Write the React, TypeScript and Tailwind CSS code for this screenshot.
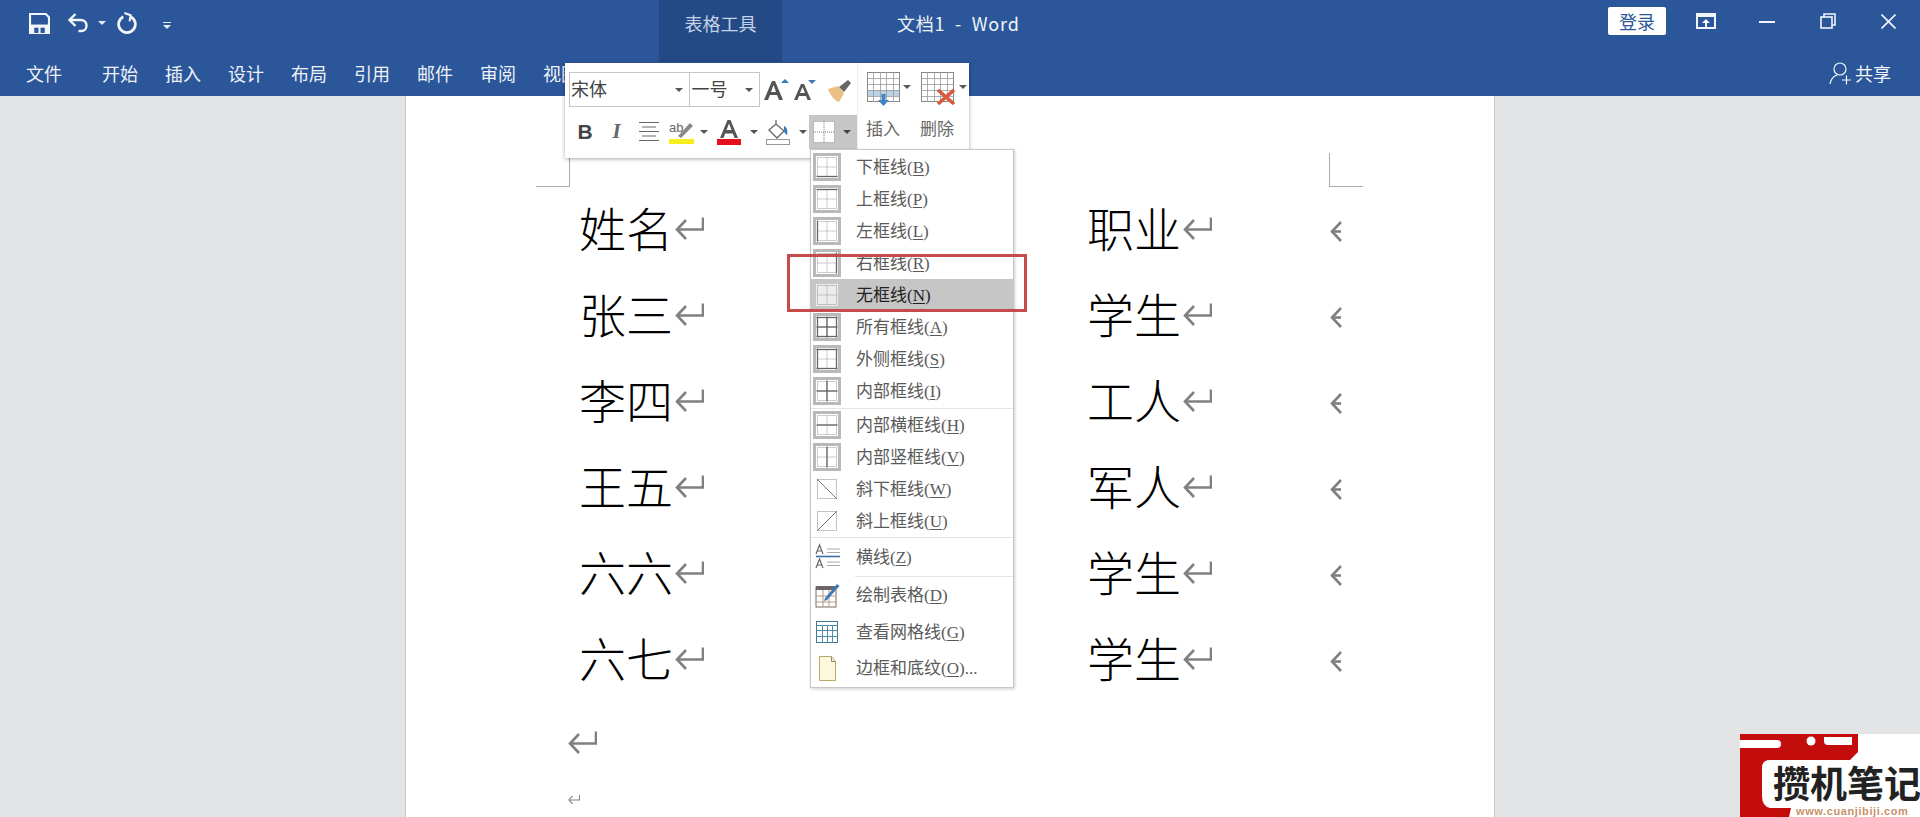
import React from "react";

const Caret = ({ c = "#555", w = 8 }: { c?: string; w?: number }) => (
  <svg width={w} height={w / 2} viewBox="0 0 8 4"><path d="M0 0h8L4 4z" fill={c} /></svg>
);

const Ret = ({ w = 29, h = 25 }: { w?: number; h?: number }) => (
  <svg width={w} height={h} viewBox="0 0 29 25" fill="none" stroke="#808080" strokeWidth="2.6">
    <path d="M28 1.5v12H3" />
    <path d="M11 4l-9 9.5 9 9.5" />
  </svg>
);

const Head = () => (
  <svg width="13" height="25" viewBox="0 0 13 25" fill="none" stroke="#808080" strokeWidth="2.6">
    <path d="M11 3l-9 9.500 9 9.500" />
    <path d="M2 12.500h9" />
  </svg>
);

type Sides = { t?: 1; b?: 1; l?: 1; r?: 1; h?: 1; v?: 1 };
const BorderIcon = ({ s, tile = true }: { s: Sides; tile?: boolean }) => (
  <svg width="28" height="28" viewBox="0 0 28 28" className="shrink-0">
    {tile && <rect x="0" y="0" width="28" height="28" fill="#b9b9b9" />}
    <rect x="3" y="3" width="22" height="22" fill={tile ? "#fff" : "#ececec"} />
    <g fill="none" stroke="#999" strokeWidth="1" strokeDasharray="1 1">
      <rect x="4.500" y="4.500" width="19" height="19" />
      <path d="M14 4.500v19M4.500 14h19" />
    </g>
    <g fill="none" stroke="#666" strokeWidth="1.300">
      {s.t && <path d="M3.500 4.500h21" />}
      {s.b && <path d="M3.500 23.500h21" />}
      {s.l && <path d="M4.500 3.500v21" />}
      {s.r && <path d="M23.500 3.500v21" />}
      {s.h && <path d="M3.500 14h21" />}
      {s.v && <path d="M14 3.500v21" />}
    </g>
  </svg>
);

const Diag = ({ up }: { up?: boolean }) => (
  <svg width="28" height="28" viewBox="0 0 28 28" className="shrink-0">
    <rect x="4.500" y="4.500" width="19" height="19" fill="none" stroke="#888" strokeDasharray="1 1" />
    <path d={up ? "M4 24L24 4" : "M4 4l20 20"} stroke="#777" strokeWidth="1" />
  </svg>
);

const LinesIcon = () => (
  <svg width="28" height="28" viewBox="0 0 28 28" className="shrink-0">
    <path d="M14 6h13M14 9.500h13M14 19h13M14 22.500h13" stroke="#aaa" strokeWidth="1" />
    <path d="M3 13.500h24" stroke="#3b6ea5" strokeWidth="1.600" />
    <path d="M3 11l3.500-9L10 11M4.300 8h4.400M3 25l3.500-9 3.500 9M4.300 22h4.400" fill="none" stroke="#666" strokeWidth="1.200" />
  </svg>
);
const DrawIcon = () => (
  <svg width="28" height="28" viewBox="0 0 28 28" className="shrink-0">
    <rect x="3" y="6" width="20" height="20" fill="#fff" stroke="#7a6a60" strokeWidth="1" />
    <rect x="3" y="5" width="20" height="4" fill="#6e6466" />
    <path d="M3 15h20M3 21h20M10 9v17M16 9v17" stroke="#b59a8a" strokeWidth="1" />
    <path d="M12 17L24 3l2.500 2L14 19l-3 1z" fill="#3f78b5" />
  </svg>
);
const GridIcon = () => (
  <svg width="28" height="28" viewBox="0 0 28 28" className="shrink-0">
    <rect x="3.500" y="3.500" width="21" height="21" fill="#fff" stroke="#3d7a92" />
    <path d="M3.500 7.500h21M3.500 12.500h21M3.500 18.500h21M9.500 7v18M14.500 7v18M19.500 7v18" stroke="#4f8aa5" />
  </svg>
);
const PageIcon = () => (
  <svg width="28" height="28" viewBox="0 0 28 28" className="shrink-0">
    <path d="M6.500 2.500h12l4 5v19h-16z" fill="#fdf8dc" stroke="#b9aa6c" />
    <path d="M18.500 2.500v5h4" fill="none" stroke="#888" />
  </svg>
);

const items: { label: string; key: string; icon: React.ReactNode }[] = [
  { label: "下框线", key: "B", icon: <BorderIcon s={{ b: 1 }} /> },
  { label: "上框线", key: "P", icon: <BorderIcon s={{ t: 1 }} /> },
  { label: "左框线", key: "L", icon: <BorderIcon s={{ l: 1 }} /> },
  { label: "右框线", key: "R", icon: <BorderIcon s={{ r: 1 }} /> },
];

const Row = ({ label, k, icon, after = "", active = false, h = "h-8" }: { label: string; k: string; icon: React.ReactNode; after?: string; active?: boolean; h?: string }) => (
  <div className={`${h} flex items-center pl-[2px] ${active ? "bg-[#c6c6c6] text-[#222]" : "text-[#5a5a5a]"}`}>
    {icon}
    <span className="ml-[15px] mb-[1px] text-[17px] leading-none whitespace-nowrap">
      {label}
      <span className="font-['Liberation_Serif',serif]">
        (<span className="underline underline-offset-2">{k}</span>){after}
      </span>
    </span>
  </div>
);

const tabs = ["开始", "插入", "设计", "布局", "引用", "邮件", "审阅", "视图"];
const rows: [string, string][] = [
  ["姓名", "职业"],
  ["张三", "学生"],
  ["李四", "工人"],
  ["王五", "军人"],
  ["六六", "学生"],
  ["六七", "学生"],
];

export default function App() {
  return (
    <div className="relative w-[1920px] h-[817px] overflow-hidden bg-[#e3e4e6] font-['Noto_Sans_CJK_SC','Liberation_Sans',sans-serif]">
      {/* Title bar */}
      <header className="h-[96px] bg-[#2b579a] text-white flex flex-col">
        <div className="h-[46px] flex items-start relative">
          <div className="flex items-center h-[46px] pl-[29px]">
            <svg width="21" height="21" viewBox="0 0 20 20">
              <path d="M1 1h15l3 3v15H1z" fill="none" stroke="#f2f5fa" strokeWidth="2" />
              <rect x="1" y="11" width="18" height="8" fill="#f2f5fa" />
              <rect x="5" y="14" width="4" height="5" fill="#2b579a" />
              <rect x="11" y="14" width="4" height="5" fill="#2b579a" />
            </svg>
            <svg className="ml-[17px]" width="23" height="22" viewBox="0 0 22 22" fill="none" stroke="#f2f5fa" strokeWidth="2.400">
              <path d="M8 2L2 8l6 6" />
              <path d="M3 8h10c4 0 6 2.500 6 5.500S17 19 14 19h-3" />
            </svg>
            <span className="ml-[8px]"><Caret c="#e6ebf3" /></span>
            <svg className="ml-[11px]" width="21" height="23" viewBox="0 0 20 22" fill="none" stroke="#f2f5fa" strokeWidth="2.600">
              <path d="M6 4.500a8 8 0 1 0 7 0" />
              <path d="M7 1l6 2-1 6" strokeWidth="2" />
            </svg>
            <span className="ml-[25px] flex flex-col items-center gap-[2px] mt-[4px]">
              <span className="w-[8px] h-[1px] bg-[#e6ebf3]" />
              <Caret c="#e6ebf3" />
            </span>
          </div>
          <div className="absolute left-[659px] top-0 w-[123px] h-[62px] bg-[#234a85] pt-[12px] text-center text-[18px] leading-[22px] text-[#c5d3e6]">
            表格工具
          </div>
          <div className="absolute left-[897px] top-[11px] text-[18px] leading-[24px] tracking-[0.8px] text-[#f0f3f8] whitespace-nowrap">
            文档1&nbsp; -&nbsp; Word
          </div>
          <div className="ml-auto flex items-center h-[46px]">
            <div className="w-[58px] h-[28px] mb-[4px] bg-white rounded-[2px] text-[#2b579a] text-[18px] leading-[28px] text-center">登录</div>
            <svg className="ml-[30px] mb-[4px]" width="20" height="16" viewBox="0 0 20 16">
              <rect x="1" y="1" width="18" height="14" fill="none" stroke="#f2f5fa" strokeWidth="2" />
              <path d="M1 1h18v3H1z" fill="#f2f5fa" />
              <path d="M10 6l4 4h-3v4H9v-4H6z" fill="#f2f5fa" />
            </svg>
            <span className="ml-[43px] w-[16px] h-[2px] mb-[3px] bg-[#f2f5fa]" />
            <svg className="ml-[45px] mb-[4px]" width="16" height="16" viewBox="0 0 16 16" fill="none" stroke="#f2f5fa" strokeWidth="1.600">
              <rect x="1" y="4" width="11" height="11" />
              <path d="M4 4V1h11v11h-3" />
            </svg>
            <svg className="ml-[45px] mr-[24px] mb-[4px]" width="15" height="15" viewBox="0 0 15 15" stroke="#f2f5fa" strokeWidth="1.600">
              <path d="M0.500 0.500l14 14M14.500 0.500l-14 14" />
            </svg>
          </div>
        </div>
        <div className="h-[50px] flex items-start">
          <span className="ml-[26px] mt-[15px] text-[18px] leading-[24px] text-[#eef2f8] whitespace-nowrap">文件</span>
          <div className="ml-[40px] mt-[15px] flex gap-[27px] text-[#eef2f8] text-[18px] leading-[24px] whitespace-nowrap">
            {tabs.map((t) => (
              <span key={t} className="w-[36px]">{t}</span>
            ))}
          </div>
          <div className="ml-auto mr-[29px] mt-[15px] flex items-center gap-[3px]">
            <svg width="23" height="24" viewBox="0 0 23 24" fill="none" stroke="#f2f5fa" strokeWidth="1.200">
              <circle cx="11" cy="8" r="6" />
              <path d="M1 23c1-5 4-8 7-9M13 19h9M17.500 14.500v9" />
            </svg>
            <span className="text-[18px] leading-[24px] text-[#f2f5fa]">共享</span>
          </div>
        </div>
      </header>

      {/* Page */}
      <main className="ml-[405px] w-[1090px] h-[721px] bg-white border-l border-r border-[#c6c6c6] overflow-hidden">
        <div className="h-[91px] flex items-end justify-between pl-[130px] pr-[131px]">
          <div className="w-[34px] h-[34px] border-r border-b border-[#ababab]" />
          <div className="w-[34px] h-[34px] border-l border-b border-[#ababab]" />
        </div>
        <div className="pl-[173px]">
          {rows.map(([a, b], i) => (
            <div key={i} className="h-[86px] grid grid-cols-[508px_242px_auto] text-[47px] leading-[80px] text-black">
              <div className="flex items-center">
                <span className="mb-[8px] font-light">{a}</span>
                <span className="ml-[2px] mb-[6px]"><Ret /></span>
              </div>
              <div className="flex items-center">
                <span className="mb-[8px] font-light">{b}</span>
                <span className="ml-[2px] mb-[6px]"><Ret /></span>
              </div>
              <div className="flex items-center ml-[1px] mt-[1px]"><Head /></div>
            </div>
          ))}
          <div className="-ml-[11px] mt-[27px] h-[25px]"><Ret /></div>
          <div className="-ml-[11px] mt-[39px]"><Ret w={12} h={11} /></div>
        </div>
      </main>

      {/* Floating mini toolbar */}
      <div className="absolute left-[565px] top-[63px] w-[404px] h-[95px] bg-white flex shadow-[0_1px_4px_rgba(0,0,0,0.35)]">
        <div className="w-[292px] pl-[4px] pt-[9px]">
          <div className="flex items-center h-[35px]">
            <div className="w-[121px] h-[35px] border border-[#c6c6c6] flex items-center justify-between pl-[1px] pr-[6px] text-[18px] leading-[27px] text-[#444]">
              <span className="mb-[3px]">宋体</span><Caret />
            </div>
            <div className="w-[71px] h-[35px] border border-l-0 border-[#c6c6c6] flex items-center justify-between pl-[2px] pr-[6px] text-[18px] leading-[27px] text-[#444]">
              <span className="mb-[3px]">一号</span><Caret />
            </div>
            <div className="w-[29px] h-[35px] ml-[1px] relative flex items-center justify-center">
              <svg width="26" height="28" viewBox="0 0 26 28">
                <path d="M1 24L9 5h3l8 19h-4l-2-5H7l-2 5zM8 16h5l-2.500-7z" fill="#555" fillRule="evenodd" />
                <path d="M18 7l4-4 4 4z" fill="#3d79b4" />
              </svg>
            </div>
            <div className="w-[30px] h-[35px] flex items-center justify-center">
              <svg width="24" height="24" viewBox="0 0 24 24">
                <path d="M1 22L8 6h3l7 16h-3.500l-1.500-4H6l-1.500 4zM7 15h5l-2.500-6z" fill="#555" fillRule="evenodd" />
                <path d="M15 2h8l-4 4z" fill="#3d79b4" />
              </svg>
            </div>
            <div className="w-[37px] h-[35px] flex items-center justify-center">
              <svg width="26" height="26" viewBox="0 0 26 26">
                <path d="M2 12l10-3 6 7-5 9c-4-1-9-7-11-13z" fill="#e9bf82" />
                <path d="M13 10l9-7 3 3-7 9z" fill="#666" />
              </svg>
            </div>
          </div>
          <div className="flex items-center h-[34px] mt-[8px]">
            <span className="w-[32px] text-center text-[21px] font-bold text-[#444] font-['Liberation_Sans',sans-serif]">B</span>
            <span className="w-[31px] text-center text-[21px] italic font-bold text-[#666] font-['Liberation_Serif',serif]">I</span>
            <span className="w-[33px] flex justify-center">
              <svg width="22" height="22" viewBox="0 0 22 22" stroke="#666" strokeWidth="1">
                <path d="M1 1.500h20M4 6h14M1 10.500h20M4 15h14M1 19.500h20" />
              </svg>
            </span>
            <span className="w-[32px] flex justify-center">
              <svg width="26" height="26" viewBox="0 0 26 26">
                <text x="1" y="13" fontSize="13" fill="#666" fontFamily="Liberation Sans">ab</text>
                <path d="M10 17L22 4l3 3-12 12z" fill="#888" />
                <rect x="1" y="20" width="25" height="5" fill="#f7ee1f" />
              </svg>
            </span>
            <span className="w-[14px] flex justify-center"><Caret /></span>
            <span className="w-[36px] flex justify-center">
              <svg width="24" height="26" viewBox="0 0 24 26">
                <path d="M3 19L10.500 1h3L21 19h-3.500l-1.700-4.500H8.200L6.500 19zM9.500 11h5l-2.500-6.500z" fill="#555" fillRule="evenodd" />
                <rect y="20" width="24" height="6" fill="#e5101a" />
              </svg>
            </span>
            <span className="w-[13px] flex justify-center"><Caret /></span>
            <span className="w-[36px] flex justify-center">
              <svg width="26" height="26" viewBox="0 0 26 26">
                <path d="M11 1v4M4 11l7-6 8 7-7 7z" fill="none" stroke="#666" strokeWidth="1.300" />
                <path d="M19 7c3 1 4 5 3 9-2-1-3-3-3-5z" fill="#3d79b4" />
                <rect x="1.500" y="20.500" width="23" height="5" fill="none" stroke="#999" />
              </svg>
            </span>
            <span className="w-[13px] flex justify-center"><Caret /></span>
            <span className="w-[48px] h-[34px] bg-[#c6c6c6] flex items-center pl-[4px] gap-[8px]">
              <svg width="22" height="22" viewBox="0 0 22 22">
                <rect width="22" height="22" fill="#fff" />
                <g fill="none" stroke="#777" strokeDasharray="1 1">
                  <rect x="0.500" y="0.500" width="21" height="21" />
                  <path d="M11 0v22M0 11h22" />
                </g>
              </svg>
              <Caret c="#444" />
            </span>
          </div>
        </div>
        <div className="w-[112px] border-l border-[#eeeeee] pt-[9px] text-[17px] text-[#666]">
          <div className="flex pl-[9px] h-[35px]">
            <div className="flex items-start w-[54px]">
              <svg width="33" height="34" viewBox="0 0 33 34">
                <rect x="0.500" y="0.500" width="32" height="29" fill="#fff" stroke="#888" />
                <rect x="1" y="18" width="31" height="6" fill="#bcd0e4" />
                <path d="M0 6.500h33M0 12.500h33M0 18.500h33M0 24.500h33M6.500 0v30M13.500 0v30M19.500 0v30M26.500 0v30" stroke="#999" strokeWidth="0.800" />
                <path d="M14.500 22h4v6h3.500l-5.500 6-5.500-6h3.500z" fill="#3d85c6" />
              </svg>
              <span className="ml-[3px] mt-[13px]"><Caret /></span>
            </div>
            <div className="flex items-start">
              <svg width="36" height="34" viewBox="0 0 36 34">
                <rect x="0.500" y="0.500" width="32" height="29" fill="#fff" stroke="#888" />
                <path d="M0 6.500h33M0 12.500h33M0 18.500h33M0 24.500h33M6.500 0v30M13.500 0v30M19.500 0v30M26.500 0v30" stroke="#999" strokeWidth="0.800" />
                <path d="M17 18l16 14M33 18L17 32" stroke="#d9593d" strokeWidth="3.600" />
              </svg>
              <span className="ml-[2px] mt-[13px]"><Caret /></span>
            </div>
          </div>
          <div className="flex pl-[8px] mt-[4px] leading-[34px]">
            <span className="w-[54px]">插入</span>
            <span>删除</span>
          </div>
        </div>
      </div>

      {/* Dropdown menu */}
      <div className="absolute left-[810px] top-[149px] w-[204px] h-[539px] bg-white border border-[#c6c6c6] pt-[1px] shadow-[1px_1px_3px_rgba(0,0,0,0.2)]">
        {items.map((it) => (
          <Row key={it.key} label={it.label} k={it.key} icon={it.icon} />
        ))}
        <Row label="无框线" k="N" active icon={<BorderIcon s={{}} tile={false} />} />
        <Row label="所有框线" k="A" icon={<BorderIcon s={{ t: 1, b: 1, l: 1, r: 1, h: 1, v: 1 }} />} />
        <Row label="外侧框线" k="S" icon={<BorderIcon s={{ t: 1, b: 1, l: 1, r: 1 }} />} />
        <Row label="内部框线" k="I" icon={<BorderIcon s={{ h: 1, v: 1 }} />} />
        <div className="h-[1px] mt-[1px] bg-[#e4e4e4]" />
        <Row label="内部横框线" k="H" icon={<BorderIcon s={{ h: 1 }} />} />
        <Row label="内部竖框线" k="V" icon={<BorderIcon s={{ v: 1 }} />} />
        <Row label="斜下框线" k="W" icon={<Diag />} />
        <Row label="斜上框线" k="U" icon={<Diag up />} />
        <div className="h-[1px] bg-[#e4e4e4]" />
        <Row label="横线" k="Z" h="h-[38px]" icon={<LinesIcon />} />
        <div className="h-[1px] ml-[44px] bg-[#e4e4e4]" />
        <Row label="绘制表格" k="D" h="h-[36px]" icon={<DrawIcon />} />
        <Row label="查看网格线" k="G" h="h-[37px]" icon={<GridIcon />} />
        <Row label="边框和底纹" k="O" after="..." h="h-[35px]" icon={<PageIcon />} />
      </div>

      {/* Red annotation box */}
      <div className="absolute left-[787px] top-[254px] w-[240px] h-[58px] border-[3px] border-[#c84b4b]" />

      {/* Watermark */}
      <div className="absolute left-[1740px] top-[734px] w-[180px] h-[83px] bg-white overflow-hidden">
        <svg className="absolute left-0 top-0" width="180" height="83" viewBox="0 0 180 83">
          <path d="M0 0H118V18L110 26H30Q22 26 22 34V62Q22 72 30 74H51L49 83H0Z" fill="#c30d0d" />
          <path d="M0 6H37Q41 6 41 10Q41 14 37 14H0Z" fill="#fff" />
          <circle cx="71" cy="7" r="4.500" fill="#fff" />
          <path d="M84 3H112V11H88Q84 11 84 7Z" fill="#fff" />
        </svg>
        <div className="absolute left-[33px] top-[26px] text-[37px] leading-[44px] font-bold text-[#222] whitespace-nowrap">攒机笔记</div>
        <div className="absolute left-[56px] top-[71px] text-[11px] leading-[12px] font-bold tracking-[0.6px] text-[#c9916a] whitespace-nowrap font-['Liberation_Sans',sans-serif]">www.cuanjibiji.com</div>
      </div>
    </div>
  );
}
